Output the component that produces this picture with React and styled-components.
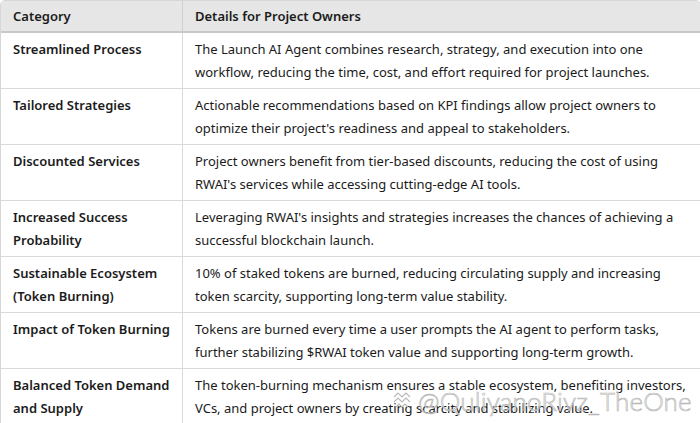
import React from "react";
import styled, { createGlobalStyle } from "styled-components";

const Global = createGlobalStyle`
  html, body { margin: 0; padding: 0; background: #ffffff; }
  body { font-family: "Noto Sans", "Lato", "Liberation Sans", sans-serif; color: #1b1b1b; }
`;

const Page = styled.div`
  position: relative;
  width: 700px;
  height: 423px;
  overflow: hidden;
  background: #fff;
`;

const Frame = styled.div`
  width: 699px;
  border: 1px solid #d6d6d6;
  border-radius: 5px 5px 0 0;
  overflow: hidden;
`;

const Table = styled.table`
  width: 100%;
  border-collapse: collapse;
  table-layout: fixed;
  font-size: 13px;
`;

const HeadCell = styled.th`
  text-align: left;
  font-weight: 600;
  background: #e6e6e6;
  height: 30px;
  padding: 0 12px;
  line-height: 30px;
  border-bottom: 2px solid #c8c8c8;
  border-left: ${(p) => (p.$first ? "none" : "1px solid #d0d0d0")};
  width: ${(p) => p.$w || "auto"};
`;

const Row = styled.tr`
  border-top: ${(p) => (p.$first ? "none" : "1px solid #d9d9d9")};
`;

const Cell = styled.td`
  vertical-align: top;
  padding: 5px 12px 4px;
  line-height: 23px;
  font-weight: ${(p) => (p.$bold ? 600 : 400)};
  border-left: ${(p) => (p.$first ? "none" : "1px solid #d9d9d9")};
`;

const Watermark = styled.div`
  position: absolute;
  left: 392px;
  top: 385px;
  display: flex;
  align-items: center;
  gap: 6px;
  pointer-events: none;
`;

const MarkText = styled.span`
  font-family: "Lato", "Liberation Sans", sans-serif;
  font-size: 26px;
  font-weight: 300;
  letter-spacing: 0.2px;
  color: rgba(255, 255, 255, 0.55);
  -webkit-text-stroke: 0.7px #b8b8b8;
`;

const rows = [
  ["Streamlined Process", "The Launch AI Agent combines research, strategy, and execution into one workflow, reducing the time, cost, and effort required for project launches."],
  ["Tailored Strategies", "Actionable recommendations based on KPI findings allow project owners to optimize their project's readiness and appeal to stakeholders."],
  ["Discounted Services", "Project owners benefit from tier-based discounts, reducing the cost of using RWAI's services while accessing cutting-edge AI tools."],
  ["Increased Success Probability", "Leveraging RWAI's insights and strategies increases the chances of achieving a successful blockchain launch."],
  ["Sustainable Ecosystem (Token Burning)", "10% of staked tokens are burned, reducing circulating supply and increasing token scarcity, supporting long-term value stability."],
  ["Impact of Token Burning", "Tokens are burned every time a user prompts the AI agent to perform tasks, further stabilizing $RWAI token value and supporting long-term growth."],
  ["Balanced Token Demand and Supply", "The token-burning mechanism ensures a stable ecosystem, benefiting investors, VCs, and project owners by creating scarcity and stabilizing value."],
];

const Logo = () => (
  <svg width="20" height="20" viewBox="0 0 20 20" fill="none" stroke="#b8b8b8" strokeWidth="1.1">
    <path d="M2 6 L6 2 L10 6 L14 2 L18 6" />
    <path d="M2 11 L6 7 L10 11 L14 7 L18 11" />
    <path d="M4 16 L7 13 L10 16 L13 13 L16 16" />
  </svg>
);

export default function App() {
  return (
    <Page>
      <Global />
      <Frame>
        <Table>
          <thead>
            <tr>
              <HeadCell $first $w="157px">Category</HeadCell>
              <HeadCell>Details for Project Owners</HeadCell>
            </tr>
          </thead>
          <tbody>
            {rows.map(([cat, det], i) => (
              <Row key={cat} $first={i === 0}>
                <Cell $first $bold>{cat}</Cell>
                <Cell>{det}</Cell>
              </Row>
            ))}
          </tbody>
        </Table>
      </Frame>
      <Watermark>
        <Logo />
        <MarkText>@QuliyanoRivz_TheOne</MarkText>
      </Watermark>
    </Page>
  );
}
